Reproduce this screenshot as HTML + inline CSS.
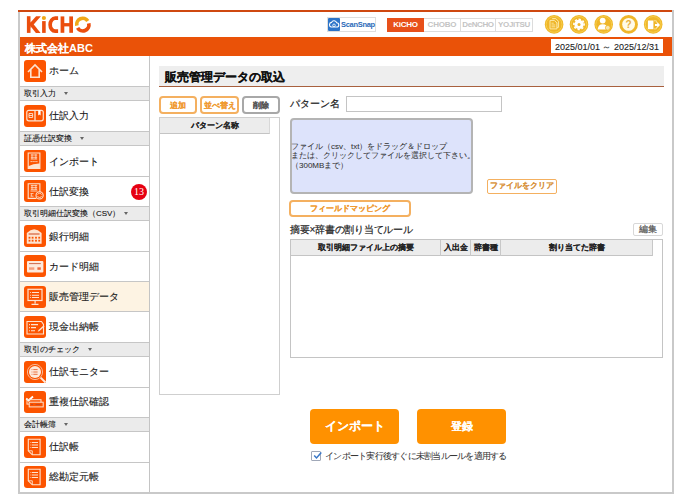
<!DOCTYPE html>
<html><head><meta charset="utf-8">
<style>
*{box-sizing:border-box;margin:0;padding:0}
html,body{width:693px;height:504px;overflow:hidden;background:#fff;font-family:"Liberation Sans",sans-serif;color:#333;-webkit-text-stroke-width:0.2px}
.a{position:absolute}
.nw{white-space:nowrap}
#frame{left:18px;top:10px;width:656px;height:484px;border:2px solid #c9c9c9;border-top:2px solid #d9501c}
#bar{left:20px;top:37px;width:652px;height:19px;background:#ea5208}
#date{left:551px;top:39px;width:112px;height:14px;background:#fff;font-size:9px;line-height:16px;text-align:center;color:#222;-webkit-text-stroke-width:0.1px}
.sec{left:20px;width:129px;height:15px;background:#ebebeb;border-top:1px solid #c6c6c6;border-bottom:1px solid #c6c6c6;font-size:8px;line-height:13px;padding-left:4px;color:#111;white-space:nowrap;-webkit-text-stroke:0.1px #111}
.tri{position:absolute;width:0;height:0;border-left:2.5px solid transparent;border-right:2.5px solid transparent;border-top:3px solid #666}
.sep{left:20px;width:129px;height:1px;background:#c6c6c6}
.ico{left:24px;width:22px;height:22px;background:#fc5400;border-radius:3px}
.ico svg{position:absolute;left:0;top:0}
.lbl{-webkit-text-stroke-width:0.12px;left:49px;font-size:9.8px;color:#1a1a1a;line-height:12px;white-space:nowrap}
#sideborder{left:149px;top:56px;width:1px;height:436px;background:#c4c4c4}
#title{-webkit-text-stroke-width:0.15px;left:159px;top:66px;width:505px;height:21px;background:#eeeeee;border-bottom:1px solid #a8603e;font-size:12px;font-weight:bold;line-height:22px;padding-left:6px;color:#111}
.btn{-webkit-text-stroke-width:0.1px;height:18px;border:2px solid #f4b060;border-radius:4px;font-size:8px;font-weight:bold;color:#f09a30;text-align:center;line-height:15px;background:#fff;white-space:nowrap}
.th{-webkit-text-stroke-width:0.05px;font-size:8px;font-weight:bold;text-align:center;color:#222;white-space:nowrap}
</style></head><body>
<div class="a" style="left:18px;top:10px;width:654px;height:2px;background:#cf4810"></div>
<div class="a" style="left:18px;top:12px;width:2px;height:482px;background:#c9c9c9"></div>
<div class="a" style="left:672px;top:10px;width:2px;height:484px;background:#c9c9c9"></div>
<div class="a" style="left:18px;top:492px;width:656px;height:2px;background:#c9c9c9"></div>

<!-- logo -->
<svg class="a" style="left:0;top:0" width="100" height="40" viewBox="0 0 100 40">
 <g fill="#eb4e0e">
  <rect x="26.9" y="16.2" width="3.6" height="16.7"/>
  <path d="M36.1 16.2H40.9L30.5 28V22.6z"/>
  <path d="M35.9 32.9H40.6L32.2 22.5H27.6z"/>
  <rect x="42.1" y="21.1" width="3.6" height="11.8"/>
  <rect x="60.6" y="16.4" width="3.7" height="16.4"/>
  <rect x="69.3" y="16.4" width="3.7" height="16.4"/>
  <rect x="62" y="23.1" width="9" height="3.3"/>
 </g>
 <path d="M58.1 18.15H55.2A5.05 6.5 0 0 0 55.2 31.15H58.1" stroke="#eb4e0e" stroke-width="3.7" fill="none"/>
 <path d="M88.76 23.4A6.05 6.05 0 0 1 77.6 27.8" stroke="#eb4e0e" stroke-width="3.7" fill="none"/>
 <path d="M76.84 25.6A6.05 6.05 0 0 1 87.8 21.0" stroke="#f0a818" stroke-width="3.7" fill="none"/>
 <circle cx="43.9" cy="18" r="2.1" fill="#f0a818"/>
</svg>

<!-- scansnap -->
<div class="a" style="left:327px;top:17px;width:49px;height:15px;border:1px solid #dedede;background:#fff"></div>
<div class="a" style="left:328px;top:18px;width:12px;height:13px;background:#2c74c9;border-radius:1px"></div>
<svg class="a" style="left:328px;top:18px" width="12" height="13"><path d="M3 9a2.4 2.4 0 0 1 0.5-4.6a2.8 2.8 0 0 1 5.2 0.4a2.1 2.1 0 0 1 0 4.2z" fill="none" stroke="#fff" stroke-width="1.1"/><circle cx="6" cy="7.3" r="1.3" fill="none" stroke="#fff" stroke-width="0.8"/></svg>
<div class="a nw" style="left:341px;top:19px;font-size:7.5px;line-height:11px;color:#2a6ab8;font-weight:bold;letter-spacing:-0.3px;-webkit-text-stroke-width:0">ScanSnap</div>

<!-- product tabs -->
<div class="a nw" style="left:387px;top:18px;width:37px;height:14px;background:#e8501a;color:#fff;font-size:8px;font-weight:bold;text-align:center;line-height:14px;letter-spacing:-0.3px;-webkit-text-stroke-width:0.01px">KiCHO</div>
<div class="a" style="left:424px;top:18px;width:109px;height:14px;border:1px solid #dcdcdc;border-left:none"></div>
<div class="a" style="left:460px;top:18px;width:1px;height:14px;background:#dcdcdc"></div>
<div class="a" style="left:495px;top:18px;width:1px;height:14px;background:#dcdcdc"></div>
<div class="a nw" style="left:424px;top:18px;width:36px;color:#c4c4c4;font-size:8px;font-weight:bold;text-align:center;line-height:14px;letter-spacing:-0.2px;-webkit-text-stroke-width:0.01px">CHOBO</div>
<div class="a nw" style="left:460px;top:18px;width:36px;color:#c4c4c4;font-size:8px;font-weight:bold;text-align:center;line-height:14px;letter-spacing:-0.4px;-webkit-text-stroke-width:0.01px">DeNCHO</div>
<div class="a nw" style="left:495px;top:18px;width:38px;color:#c4c4c4;font-size:8px;font-weight:bold;text-align:center;line-height:14px;letter-spacing:-0.3px;-webkit-text-stroke-width:0.01px">YOJiTSU</div>

<!-- header icons -->
<svg class="a" style="left:0;top:0" width="693" height="40" viewBox="0 0 693 40">
 <g fill="#efb62a">
  <circle cx="554.1" cy="24.4" r="9.3"/>
  <circle cx="579" cy="24.4" r="9.3"/>
  <circle cx="603.7" cy="24.4" r="9.3"/>
  <circle cx="628.6" cy="24.4" r="9.3"/>
  <circle cx="653.2" cy="24.4" r="9.3"/>
 </g>
 <g fill="none" stroke="#f8cf4a" stroke-width="1">
  <circle cx="554.1" cy="24.4" r="7.9"/><circle cx="579" cy="24.4" r="7.9"/><circle cx="603.7" cy="24.4" r="7.9"/><circle cx="653.2" cy="24.4" r="7.9"/>
 </g>
 <!-- doc -->
 <path d="M552.2 18.6h3.6l2.6 2.6v6.2h-1.4" fill="none" stroke="#fdeaa8" stroke-width="1"/>
 <path d="M550 20.4h4.3l2.6 2.6v5.9h-6.9z" fill="#efb62a" stroke="#fdeaa8" stroke-width="1"/>
 <path d="M551.5 23.2h2.2M551.5 25h3.8M551.5 26.8h3.8" stroke="#fdeaa8" stroke-width="0.9"/>
 <!-- gear -->
 <circle cx="579" cy="24.4" r="4.6" fill="#fff"/>
 <circle cx="579" cy="24.4" r="5.1" fill="none" stroke="#fff" stroke-width="1.6" stroke-dasharray="2.2 1.806" transform="rotate(-11 579 24.4)"/>
 <circle cx="579" cy="24.4" r="1.5" fill="#efb62a"/>
 <!-- user -->
 <circle cx="602.7" cy="20.6" r="2.9" fill="#fff"/>
 <path d="M597.8 29.4c0-3.5 2-5.2 4.9-5.2s4.9 1.7 4.9 5.2z" fill="#fff"/>
 <circle cx="607.8" cy="27.8" r="2.4" fill="#f8e6b0" stroke="#efb62a" stroke-width="0.8"/>
 <!-- help -->
 <circle cx="628.6" cy="24.4" r="6.4" fill="#fffbe8"/>
 <text x="628.6" y="28" font-size="10" font-weight="bold" fill="#e8b040" text-anchor="middle" font-family="Liberation Sans">?</text>
 <!-- exit -->
 <path d="M647.9 20.5h5.5v8.7h-5.5z" fill="#fff"/>
 <path d="M653.8 20.8h2.6v2M653.8 28.9h2.6v-2" fill="none" stroke="#fce8a8" stroke-width="0.8"/>
 <path d="M655 24.1h2.2v-2l2.8 3l-2.8 3v-2h-2.2z" fill="#fff"/>
</svg>

<div id="bar" class="a"></div>
<div class="a nw" style="left:25px;top:41px;font-size:11px;line-height:14px;font-weight:bold;color:#fff;-webkit-text-stroke-width:0.01px">株式会社ABC</div>
<div id="date" class="a nw">2025/01/01 ～ 2025/12/31</div>

<!-- sidebar -->
<div class="a" style="left:20px;top:282px;width:129px;height:29px;background:#fdf3e3"></div>
<div class="sec a" style="top:86px">取引入力</div>
<div class="sec a" style="top:131px">証憑仕訳変換</div>
<div class="sep a" style="top:176px"></div>
<div class="sec a" style="top:206px">取引明細仕訳変換（CSV）</div>
<div class="sep a" style="top:251px"></div>
<div class="sep a" style="top:281px"></div>
<div class="sep a" style="top:311px"></div>
<div class="sec a" style="top:342px">取引のチェック</div>
<div class="sep a" style="top:387px"></div>
<div class="sec a" style="top:417px">会計帳簿</div>
<div class="sep a" style="top:462px"></div>
<div class="tri" style="left:64px;top:91.8px"></div><div class="tri" style="left:80.3px;top:136.8px"></div><div class="tri" style="left:124px;top:211.8px"></div><div class="tri" style="left:87.6px;top:347.8px"></div><div class="tri" style="left:64.4px;top:422.8px"></div>

<div class="ico a" style="top:60px"><svg width="22" height="22"><path d="M4 12L11 5L18 12M6.8 9.6V17.3H15.2V9.6" fill="none" stroke="#fde3d0" stroke-width="1.6"/></svg></div>
<div class="lbl a" style="top:65px">ホーム</div>

<div class="ico a" style="top:105px"><svg width="22" height="22"><rect x="2.8" y="5.3" width="16.5" height="10.5" rx="2" fill="none" stroke="#fde3d0" stroke-width="1.2"/><path d="M11 5.3v10.5" stroke="#fde3d0" stroke-width="1.3"/><path d="M5 8.5h3.6v4h-3.6zM5 10.5h3.6" fill="none" stroke="#fde3d0" stroke-width="0.9"/><path d="M14.2 5.3v5.2l1.2-1 1.2 1v-5.2z" fill="#fff"/></svg></div>
<div class="lbl a" style="top:110px">仕訳入力</div>

<div class="ico a" style="top:150px"><svg width="22" height="22"><path d="M4.2 3h11.7v15.4h-11.7z" fill="none" stroke="#fde3d0" stroke-width="1.1"/><path d="M6.8 5h6.4M6.8 7.3h6.4M6.8 9h6.4M8 4.2v5M11.9 4.2v5" stroke="#fde3d0" stroke-width="0.8" fill="none"/><path d="M6.5 11.6h7" stroke="#fde3d0" stroke-width="0.9" stroke-dasharray="1.4 0.5"/><path d="M4.2 18.4V16.2Q9.5 13.4 15.9 13.6V18.4z" fill="#fde3d0"/></svg></div>
<div class="lbl a" style="top:156px">インポート</div>

<div class="ico a" style="top:180px"><svg width="22" height="22"><path d="M15.9 12V3.7H4.2V18.4H12.5" fill="none" stroke="#fde3d0" stroke-width="1.1"/><path d="M6.8 5.6h6.4M6.8 7.6h6.4M6.8 9.3h6.4M8 4.8v5M11.9 4.8v5" stroke="#fde3d0" stroke-width="0.8" fill="none"/><path d="M6.5 11h7" stroke="#fde3d0" stroke-width="0.9"/><path d="M6.5 13.6h3M7.3 13.6v2.6M6.5 16.2h3" stroke="#fde3d0" stroke-width="0.8" fill="none"/><circle cx="15.6" cy="15.4" r="3.6" fill="#fc5400" stroke="#fde3d0" stroke-width="1.1"/><path d="M13.6 14.6a2.1 2.1 0 0 1 3.9 0M17.5 16.2a2.1 2.1 0 0 1-3.9 0" fill="none" stroke="#fde3d0" stroke-width="0.9"/></svg></div>
<div class="lbl a" style="top:186px">仕訳変換</div>
<div class="a" style="left:131px;top:183.5px;width:16px;height:16px;border-radius:50%;background:#e60012"></div>
<div class="a nw" style="left:131px;top:186px;width:16px;-webkit-text-stroke-width:0;color:#fff;font-family:'Liberation Serif',serif;font-size:10px;line-height:11px;text-align:center">13</div>

<div class="ico a" style="top:225px"><svg width="22" height="22"><path d="M2.8 8Q10.2 0.6 17.6 8V18.7H2.8z" fill="#fde3d0"/><path d="M4.6 9h11" stroke="#d86a48" stroke-width="1.3"/><g fill="#fc5400"><rect x="4.6" y="11.8" width="1.8" height="1.8"/><rect x="7.7" y="11.8" width="1.8" height="1.8"/><rect x="11.1" y="11.8" width="1.8" height="1.8"/><rect x="14.3" y="11.8" width="1.8" height="1.8"/><rect x="4.6" y="14.8" width="1.8" height="1.8"/><rect x="7.7" y="14.8" width="1.8" height="1.8"/><rect x="11.1" y="14.8" width="1.8" height="1.8"/><rect x="14.3" y="14.8" width="1.8" height="1.8"/></g></svg></div>
<div class="lbl a" style="top:231px">銀行明細</div>

<div class="ico a" style="top:255px"><svg width="22" height="22"><rect x="3" y="6" width="16.4" height="11.4" rx="1" fill="#fde9dc"/><path d="M5 8.6h11.8" stroke="#c85a3a" stroke-width="0.9"/><rect x="5" y="12.3" width="5.3" height="2.5" fill="#f4a080"/><rect x="13.4" y="12.3" width="3.4" height="2.5" fill="#ec6a40"/></svg></div>
<div class="lbl a" style="top:261px">カード明細</div>

<div class="ico a" style="top:286px"><svg width="22" height="22"><rect x="4" y="3.3" width="14" height="11.2" fill="none" stroke="#fde3d0" stroke-width="1.2"/><path d="M8 6.5h7M8 9.3h7M8 11.5h7" stroke="#fde3d0" stroke-width="1"/><path d="M6.2 6.5h0.9M6.2 9.3h0.9M6.2 11.5h0.9" stroke="#fde3d0" stroke-width="1"/><path d="M10.5 14.5h1.2v3h-1.2zM7.5 17.8h7v1.2h-7z" fill="#fde3d0"/></svg></div>
<div class="lbl a" style="top:291px">販売管理データ</div>

<div class="ico a" style="top:316px"><svg width="22" height="22"><path d="M3 5.5h14.5l2 3v9.5h-16.5z" fill="none" stroke="#fde3d0" stroke-width="1.1"/><path d="M7 8.6h7M7 11.6h5M7 14.7h4" stroke="#fde3d0" stroke-width="1.1"/><path d="M5 8.6h0.9M5 11.6h0.9M5 14.7h0.9" stroke="#fde3d0" stroke-width="1.1"/><path d="M19.5 9.5l-5 4.5-0.8 1.8 1.8-0.8 5-4.5z" fill="#fde3d0"/></svg></div>
<div class="lbl a" style="top:321px">現金出納帳</div>

<div class="ico a" style="top:361px;border-bottom-right-radius:0"><svg width="22" height="22"><circle cx="11" cy="11" r="7.6" fill="none" stroke="#f9b898" stroke-width="1"/><circle cx="11" cy="11" r="6" fill="#fde9dc"/><path d="M9.3 8.6h4.3M9.3 11h4.3M9.3 13.3h4.3M7.6 8.6h0.8M7.6 11h0.8M7.6 13.3h0.8" stroke="#e8602a" stroke-width="0.9"/><path d="M16.6 16.6l5 5" stroke="#fde9dc" stroke-width="2"/></svg></div>
<div class="lbl a" style="top:366px">仕訳モニター</div>

<div class="ico a" style="top:391px"><svg width="22" height="22"><path d="M2.2 7.5l2.3 2 4.5-4" fill="none" stroke="#fff" stroke-width="1.8"/><rect x="3" y="8.7" width="14" height="4.4" fill="none" stroke="#fde3d0" stroke-width="1"/><rect x="5.2" y="11.2" width="14" height="4.7" fill="#fc5400" stroke="#fde3d0" stroke-width="1"/><path d="M7 13.5h2M11.5 13.5h5" stroke="#c84a20" stroke-width="1"/></svg></div>
<div class="lbl a" style="top:396px">重複仕訳確認</div>

<div class="ico a" style="top:436px"><svg width="22" height="22"><path d="M4.3 3.3h11.8v15.5h-7.8l-4-4z" fill="none" stroke="#fde3d0" stroke-width="1.1"/><path d="M4.3 14.8h4v4" fill="none" stroke="#fde3d0" stroke-width="0.9"/><path d="M8 6.5h6M8 9h6M8 11.5h6M6.5 6.5h0.8M6.5 9h0.8M6.5 11.5h0.8" stroke="#fde3d0" stroke-width="1"/></svg></div>
<div class="lbl a" style="top:441px">仕訳帳</div>

<div class="ico a" style="top:466px"><svg width="22" height="22"><path d="M4.3 3.3h11.8v15.5h-7.8l-4-4z" fill="none" stroke="#fde3d0" stroke-width="1.1"/><path d="M4.3 14.8h4v4" fill="none" stroke="#fde3d0" stroke-width="0.9"/><path d="M8 6.5h6M8 9h6M8 11.5h6M6.5 6.5h0.8M6.5 9h0.8M6.5 11.5h0.8" stroke="#fde3d0" stroke-width="1"/></svg></div>
<div class="lbl a" style="top:471px">総勘定元帳</div>
<div id="sideborder" class="a"></div>

<!-- content -->
<div id="title" class="a nw">販売管理データの取込</div>
<div class="btn a" style="left:159px;top:96px;width:38px">追加</div>
<div class="btn a" style="left:200px;top:96px;width:39px">並べ替え</div>
<div class="btn a" style="left:242px;top:96px;width:38px;border-color:#a8a8a8;color:#555">削除</div>
<div class="a" style="left:159px;top:117px;width:121px;height:278px;border:1px solid #cfcfcf"></div>
<div class="a th" style="left:160px;top:118px;width:110px;height:16px;line-height:15px;background:#ececec;border-bottom:1px solid #c4c4c4;border-right:1px solid #d8d8d8">パターン名称</div>

<div class="a nw" style="left:290px;top:97px;font-size:9.5px;line-height:13px;color:#222">パターン名</div>
<div class="a" style="left:346px;top:96px;width:156px;height:16px;border:1px solid #c4c4c4;background:#fff"></div>

<div class="a" style="left:290px;top:118px;width:183px;height:76px;border:2px solid #b4b4b4;border-radius:4px;background:#dde3fb"></div>
<div class="a nw" style="left:291px;top:142px;font-size:8px;line-height:9.3px;color:#333;-webkit-text-stroke-width:0.05px">ファイル（csv、txt）をドラッグ＆ドロップ<br>または、クリックしてファイルを選択して下さい。<br>（300MBまで）</div>

<div class="btn a" style="left:487px;top:179px;width:70px;height:15px;line-height:11px;border-radius:2px;border-width:1.5px;color:#d8923c;-webkit-text-stroke-width:0.01px">ファイルをクリア</div>
<div class="btn a" style="left:289px;top:200px;width:122px;height:17px;line-height:13px">フィールドマッピング</div>

<div class="a nw" style="left:290px;top:224px;font-size:10px;letter-spacing:-0.25px;line-height:12px;color:#222">摘要×辞書の割り当てルール</div>
<div class="a nw" style="left:633px;top:223px;width:30px;height:13px;border:1px solid #d8d8d8;border-radius:2px;font-size:8.5px;line-height:11px;text-align:center;color:#555">編集</div>

<div class="a" style="left:290px;top:239px;width:373px;height:119px;border:1px solid #c4c4c4"></div>
<div class="a" style="left:291px;top:240px;width:362px;height:16px;background:#ececec;border-bottom:1px solid #c4c4c4"></div>
<div class="a th" style="left:291px;top:240px;width:150px;height:16px;line-height:15px;border-right:1px solid #c8c8c8">取引明細ファイル上の摘要</div>
<div class="a th" style="left:441px;top:240px;width:30px;height:16px;line-height:15px;border-right:1px solid #c8c8c8">入出金</div>
<div class="a th" style="left:471px;top:240px;width:30px;height:16px;line-height:15px;border-right:1px solid #c8c8c8">辞書種</div>
<div class="a th" style="left:501px;top:240px;width:152px;height:16px;line-height:15px;border-right:1px solid #c8c8c8">割り当てた辞書</div>

<div class="a nw" style="left:310px;top:409px;width:89px;height:35px;background:#ff9100;border-radius:4px;color:#fff;font-size:11.5px;font-weight:bold;text-align:center;line-height:35px;-webkit-text-stroke-width:0.01px">インポート</div>
<div class="a nw" style="left:417px;top:409px;width:89px;height:35px;background:#ff9100;border-radius:4px;color:#fff;font-size:11px;font-weight:bold;text-align:center;line-height:35px;-webkit-text-stroke-width:0.01px">登録</div>

<div class="a" style="left:311px;top:451px;width:10px;height:10px;border:1px solid #a0a8b8;background:#fff;border-radius:1px"></div>
<svg class="a" style="left:312px;top:450px" width="11" height="11"><path d="M2.2 5.6l2.3 2.4l4.8-5.6" fill="none" stroke="#3a78c8" stroke-width="1.5"/></svg>
<div class="a nw" style="left:325px;top:451px;font-size:9px;letter-spacing:-0.75px;line-height:11px;color:#333;-webkit-text-stroke-width:0.05px">インポート実行後すぐに未割当ルールを適用する</div>
</body></html>
